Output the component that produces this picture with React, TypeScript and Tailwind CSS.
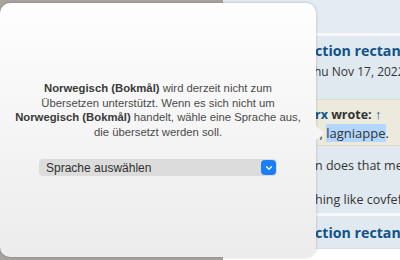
import { ChevronDown } from "lucide-react";

export default function App() {
  return (
    <div className="relative w-[400px] h-[260px] overflow-hidden bg-[#a8a5a1]">
      {/* ── page behind the popover ── */}
      <div className="absolute left-[223px] top-0 w-[177px] h-[260px] flex flex-col bg-white font-['Open_Sans',sans-serif]">
        <div className="h-[33px] bg-[#e4ebf2]" />
        <div className="h-[3px] bg-[#f6f8fa]" />
        <div className="bg-[#e1e9f0] flex flex-col pt-[5px]">
          <p className="pl-[92px] text-[14.2px] font-bold text-[#105289] whitespace-nowrap leading-[20px]">
            ction rectangle
          </p>
          <p className="pl-[91px] text-[12px] text-[#333] whitespace-nowrap leading-[18px] mt-[2px]">
            hu Nov 17, 2022
          </p>
          <div className="mt-[18px] bg-[#ebeadd] pt-[6px] pb-[3px] pl-[92px] border-y border-[#dbdbce]">
            <p className="text-[12.5px] font-bold whitespace-nowrap leading-[18px]">
              <span className="text-[#105289]">rx</span>{" "}
              <span className="text-[#333]">wrote:</span>{" "}
              <span className="text-[#105289]">↑</span>
            </p>
            <p className="text-[13px] text-[#333] whitespace-nowrap leading-[18px] -ml-[2px]">
              y, <span className="bg-[#b3d7fd]">lagniappe</span>.
            </p>
          </div>
          <div className="flex flex-col pl-[92px] pt-[11px] pb-[4px] gap-[16px]">
            <p className="text-[12.5px] text-[#333] whitespace-nowrap leading-[18px]">
              n does that mean
            </p>
            <p className="text-[12.5px] text-[#333] whitespace-nowrap leading-[18px]">
              hing like covfefe
            </p>
          </div>
        </div>
        <div className="h-[3px] bg-[#f6f8fa]" />
        <div className="bg-[#e1e9f0] pl-[92px] pt-[7px] pb-[5px]">
          <p className="text-[14.2px] font-bold text-[#105289] whitespace-nowrap leading-[20px]">
            ction rectangle
          </p>
        </div>
        <div className="flex-1 bg-white border-t border-[#d9dfe5]" />
      </div>

      {/* ── translation popover ── */}
      <div className="absolute left-0 top-[3px] w-[316px] h-[254px] rounded-[10px] bg-gradient-to-b from-[#fefefe] to-[#ececec] shadow-[0_0_3px_rgba(0,0,0,0.25)] font-['Liberation_Sans',sans-serif]">
        <div className="absolute -right-[8px] top-[122px] w-0 h-0 border-y-[8px] border-y-transparent border-l-[9px] border-l-[#f6f6f6]" />
        <div className="flex flex-col items-center pt-[78px]">
          <p className="text-[11.3px] leading-[14.6px] text-[#4a4a4a] text-center whitespace-nowrap">
            <b className="font-bold text-[#3a3a3a]">Norwegisch (Bokmål)</b> wird derzeit nicht zum
            <br />
            Übersetzen unterstützt. Wenn es sich nicht um
            <br />
            <b className="font-bold text-[#3a3a3a]">Norwegisch (Bokmål)</b> handelt, wähle eine Sprache aus,
            <br />
            die übersetzt werden soll.
          </p>
          <div className="mt-[20px] w-[238px] h-[17px] rounded-[4px] bg-[#dcdcdc] flex items-center justify-between pl-[7px] pr-[1px]">
            <span className="text-[12px] text-[#2f2f2f]">Sprache auswählen</span>
            <span className="w-[15px] h-[15px] rounded-[4px] bg-[#1a7ef7] flex items-center justify-center">
              <ChevronDown className="w-[10px] h-[10px] text-white" strokeWidth={3} />
            </span>
          </div>
        </div>
      </div>
    </div>
  );
}
